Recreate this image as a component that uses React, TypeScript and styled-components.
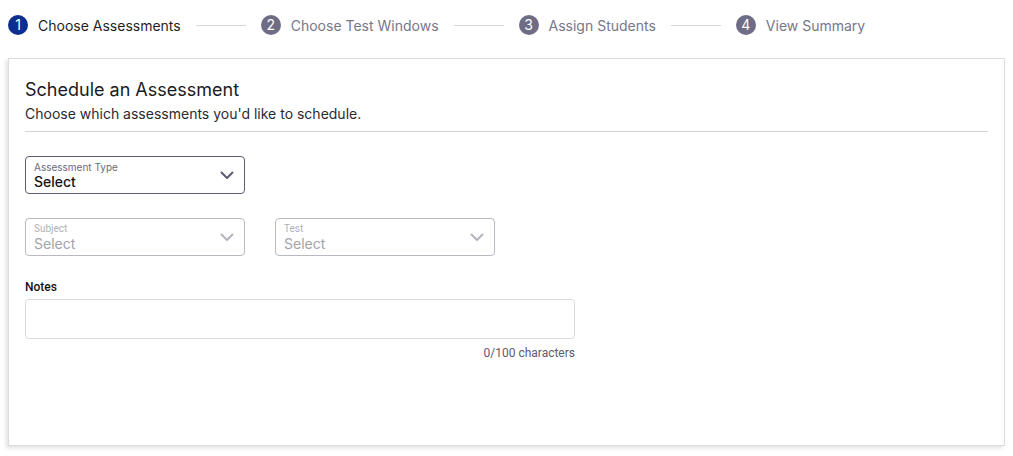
import React from 'react';
import styled, { createGlobalStyle } from 'styled-components';

const GlobalStyle = createGlobalStyle`
    body {
        margin: 0;
        background: #fff;
        font-family: Inter, "Liberation Sans", sans-serif;
    }
`;

const steps = ['Choose Assessments', 'Choose Test Windows', 'Assign Students', 'View Summary'];

const Chevron = ({ color }: { color: string }) => (
    <svg width="14" height="9" viewBox="0 0 14 9" fill="none">
        <path d="M1.5 1.5 L7 7 L12.5 1.5" stroke={color} strokeWidth="2" strokeLinecap="round" strokeLinejoin="round" />
    </svg>
);

export default function App() {
    return (
        <>
            <GlobalStyle />
            <Page>
                <Stepper>
                    {steps.map((label, i) => (
                        <React.Fragment key={label}>
                            {i > 0 && <StepLine />}
                            <Step>
                                <StepCircle active={i === 0}>{i + 1}</StepCircle>
                                <StepLabel active={i === 0}>{label}</StepLabel>
                            </Step>
                        </React.Fragment>
                    ))}
                </Stepper>

                <Card>
                    <Title>Schedule an Assessment</Title>
                    <Subtitle>Choose which assessments you'd like to schedule.</Subtitle>
                    <Divider />

                    <Form>
                        <Row>
                            <Select>
                                <SelectText>
                                    <SelectLabel>Assessment Type</SelectLabel>
                                    <SelectValue>Select</SelectValue>
                                </SelectText>
                                <Chevron color="#5c5c72" />
                            </Select>
                        </Row>

                        <Row>
                            <Select disabled>
                                <SelectText>
                                    <SelectLabel disabled>Subject</SelectLabel>
                                    <SelectValue disabled>Select</SelectValue>
                                </SelectText>
                                <Chevron color="#b4b4bc" />
                            </Select>
                            <Select disabled>
                                <SelectText>
                                    <SelectLabel disabled>Test</SelectLabel>
                                    <SelectValue disabled>Select</SelectValue>
                                </SelectText>
                                <Chevron color="#b4b4bc" />
                            </Select>
                        </Row>

                        <NotesField>
                            <NotesLabel>Notes</NotesLabel>
                            <NotesBox />
                            <Counter>0/100 characters</Counter>
                        </NotesField>
                    </Form>
                </Card>
            </Page>
        </>
    );
}

const Page = styled.div`
    padding: 14px 8px 10px 8px;
    display: flex;
    flex-direction: column;
    gap: 22px;
`;

const Stepper = styled.div`
    display: flex;
    align-items: center;
    height: 22px;
`;

const Step = styled.div`
    display: flex;
    align-items: center;
    gap: 10px;
`;

const StepCircle = styled.div<{ active?: boolean }>`
    width: 20px;
    height: 20px;
    border-radius: 50%;
    background: ${p => (p.active ? '#0b2e8f' : '#6e6d85')};
    color: #fff;
    font-size: 14px;
    display: flex;
    align-items: center;
    justify-content: center;
    line-height: 1;
`;

const StepLabel = styled.span<{ active?: boolean }>`
    font-size: 14px;
    color: ${p => (p.active ? '#1f1f24' : '#77768c')};
`;

const StepLine = styled.div`
    width: 50px;
    height: 1px;
    background: #d8d8dc;
    margin: 0 15px;
`;

const Card = styled.div`
    border: 1px solid #dcdcdc;
    box-shadow: -2px 2px 4px rgba(0, 0, 0, 0.12);
    background: #fff;
    padding: 20px 16px 16px 16px;
    height: 388px;
    box-sizing: border-box;
`;

const Title = styled.h2`
    margin: 0;
    font-size: 18px;
    font-weight: 400;
    color: #1b1b1f;
    line-height: 22px;
`;

const Subtitle = styled.p`
    margin: 3px 0 0 0;
    font-size: 14px;
    color: #2a2a30;
    line-height: 20px;
`;

const Divider = styled.hr`
    border: none;
    border-top: 1px solid #d6d6d8;
    margin: 7px 0 0 0;
`;

const Form = styled.div`
    margin-top: 24px;
    display: flex;
    flex-direction: column;
    gap: 24px;
`;

const Row = styled.div`
    display: flex;
    gap: 30px;
`;

const Select = styled.div<{ disabled?: boolean }>`
    width: 220px;
    height: 38px;
    box-sizing: border-box;
    border: 1px solid ${p => (p.disabled ? '#b9b9c2' : '#5e5d75')};
    border-radius: 4px;
    padding: 0 8px 0 8px;
    display: flex;
    align-items: center;
    justify-content: space-between;
    svg {
        margin-right: 2px;
    }
`;

const SelectText = styled.div`
    display: flex;
    flex-direction: column;
    padding-top: 1px;
`;

const SelectLabel = styled.span<{ disabled?: boolean }>`
    font-size: 10px;
    line-height: 12px;
    color: ${p => (p.disabled ? '#b0b0b8' : '#6a6a78')};
    font-family: ${p => (p.disabled ? 'Roboto, "Liberation Sans", sans-serif' : 'Inter, "Liberation Sans", sans-serif')};
`;

const SelectValue = styled.span<{ disabled?: boolean }>`
    font-size: 14px;
    line-height: 17px;
    font-weight: ${p => (p.disabled ? 400 : 500)};
    color: ${p => (p.disabled ? '#a3a3ab' : '#141418')};
`;

const NotesField = styled.div`
    width: 550px;
    display: flex;
    flex-direction: column;
`;

const NotesLabel = styled.label`
    font-family: Roboto, "Liberation Sans", sans-serif;
    font-size: 12px;
    font-weight: 500;
    color: #111;
    line-height: 14px;
    margin-bottom: 5px;
`;

const NotesBox = styled.div`
    height: 40px;
    box-sizing: border-box;
    border: 1px solid #dadadd;
    border-radius: 4px;
`;

const Counter = styled.span`
    align-self: flex-end;
    margin-top: 7px;
    font-family: Roboto, "Liberation Sans", sans-serif;
    font-size: 12px;
    color: #5c5b70;
    line-height: 14px;
`;
